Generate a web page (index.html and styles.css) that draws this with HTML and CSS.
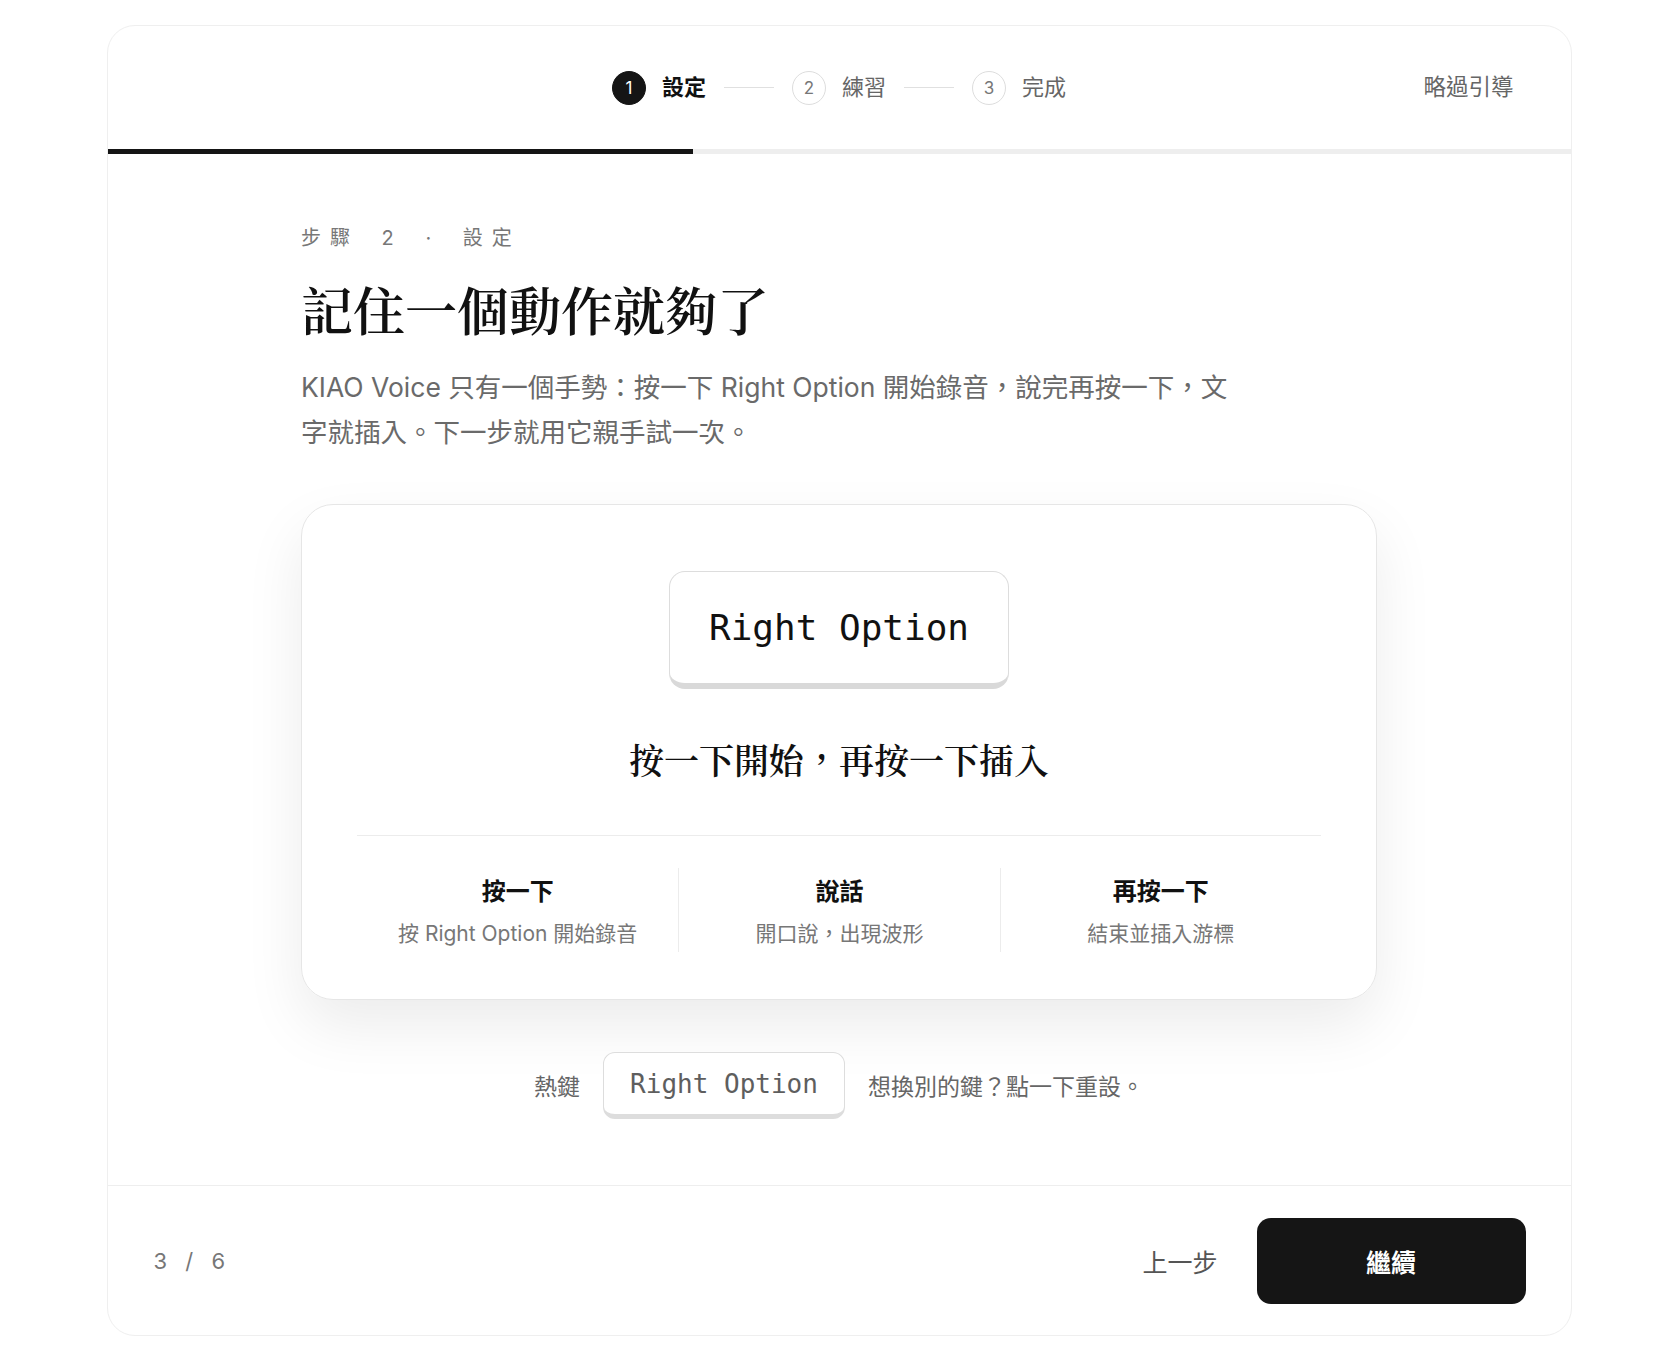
FILE: index.html
```html
<!DOCTYPE html>
<html lang="zh-Hant">
<head>
    <meta charset="UTF-8">
    <meta name="viewport" content="width=device-width, initial-scale=1.0">
    <title>KIAO Voice 引導</title>
    <link rel="stylesheet" href="styles.css">
</head>
<body>
    <div class="window">
        <!-- 上方步驟列 -->
        <header class="top-bar">
            <div></div>
            <div class="steps">
                <div class="step active">
                    <span class="step-num">1</span>
                    <span class="step-label">設定</span>
                </div>
                <span class="step-line"></span>
                <div class="step">
                    <span class="step-num">2</span>
                    <span class="step-label">練習</span>
                </div>
                <span class="step-line"></span>
                <div class="step">
                    <span class="step-num">3</span>
                    <span class="step-label">完成</span>
                </div>
            </div>
            <a class="skip-link">略過引導</a>
        </header>

        <div class="progress">
            <div class="progress-fill" style="width: 40%"></div>
        </div>

        <main class="content">
            <div class="eyebrow">步驟 2 · 設定</div>
            <h1 class="title">記住一個動作就夠了</h1>
            <p class="lead">KIAO Voice 只有一個手勢：按一下 Right Option 開始錄音，說完再按一下，文字就插入。下一步就用它親手試一次。</p>

            <!-- 示範卡片 -->
            <section class="demo-card">
                <div class="keycap">Right Option</div>
                <div class="demo-caption">按一下開始，再按一下插入</div>
                <div class="demo-divider"></div>
                <div class="demo-steps">
                    <div class="demo-step">
                        <div class="demo-step-title">按一下</div>
                        <div class="demo-step-desc">按 Right Option 開始錄音</div>
                    </div>
                    <div class="demo-step">
                        <div class="demo-step-title">說話</div>
                        <div class="demo-step-desc">開口說，出現波形</div>
                    </div>
                    <div class="demo-step">
                        <div class="demo-step-title">再按一下</div>
                        <div class="demo-step-desc">結束並插入游標</div>
                    </div>
                </div>
            </section>

            <!-- 熱鍵設定 -->
            <div class="hotkey-row">
                <span class="hotkey-label">熱鍵</span>
                <button class="hotkey-key">Right Option</button>
                <span class="hotkey-hint">想換別的鍵？點一下重設。</span>
            </div>
        </main>

        <footer class="bottom-bar">
            <span class="page-count">3 / 6</span>
            <div class="actions">
                <button class="btn-back">上一步</button>
                <button class="btn-next">繼續</button>
            </div>
        </footer>
    </div>
</body>
</html>
```

FILE: styles.css
```css
* {
    margin: 0;
    padding: 0;
    box-sizing: border-box;
}

body {
    background-color: #ffffff;
    font-family: 'Inter', 'Noto Sans CJK TC', sans-serif;
    color: #111111;
    padding: 25px 0 24px;
}

button {
    font-family: inherit;
    border: none;
    background: none;
    cursor: pointer;
}

.window {
    width: 1465px;
    height: 1311px;
    margin: 0 auto;
    border: 1px solid #efefef;
    border-radius: 28px;
    overflow: hidden;
    display: flex;
    flex-direction: column;
    background-color: #ffffff;
}

/* 上方步驟列 */
.top-bar {
    height: 123px;
    display: grid;
    grid-template-columns: 1fr auto 1fr;
    align-items: center;
    padding: 0 57px;
}

.steps {
    display: flex;
    align-items: center;
    gap: 18px;
}

.step {
    display: flex;
    align-items: center;
    gap: 16px;
}

.step-num {
    width: 34px;
    height: 34px;
    border-radius: 50%;
    border: 1.5px solid #dddddd;
    display: flex;
    align-items: center;
    justify-content: center;
    font-size: 17px;
    color: #777777;
}

.step-label {
    font-size: 22px;
    color: #666666;
    padding-bottom: 5px;
}

.step.active .step-num {
    background-color: #151515;
    border-color: #151515;
    color: #ffffff;
}

.step.active .step-label {
    color: #111111;
    font-weight: 700;
}

.step-line {
    width: 50px;
    height: 1.5px;
    background-color: #e0e0e0;
}

.skip-link {
    justify-self: end;
    font-size: 22.5px;
    color: #666666;
    padding-bottom: 5px;
    cursor: pointer;
}

.progress {
    height: 5px;
    background-color: #eeeeee;
}

.progress-fill {
    height: 100%;
    background-color: #151515;
}

/* 主內容 */
.content {
    flex: 1;
    width: 1076px;
    margin: 0 auto;
    padding-top: 70px;
    display: flex;
    flex-direction: column;
}

.eyebrow {
    font-size: 20px;
    line-height: 28px;
    letter-spacing: 9px;
    word-spacing: 8px;
    color: #777777;
}

.title {
    margin-top: 23px;
    font-family: 'Noto Serif CJK TC', 'Noto Serif TC', serif;
    font-size: 52px;
    line-height: 68px;
    font-weight: 600;
    color: #111111;
}

.lead {
    margin-top: 22px;
    max-width: 940px;
    font-size: 26.5px;
    line-height: 45px;
    color: #6a6a6a;
}

.demo-card {
    margin-top: 49px;
    border: 1px solid #e6e6e6;
    border-radius: 32px;
    padding: 66px 55px 47px;
    display: flex;
    flex-direction: column;
    align-items: center;
    box-shadow: 0 26px 60px rgba(0, 0, 0, 0.08);
}

.keycap {
    width: 340px;
    height: 118px;
    border: 1.5px solid #dddddd;
    border-bottom: 6px solid #d9d9d9;
    border-radius: 16px;
    display: flex;
    align-items: center;
    justify-content: center;
    font-family: 'DejaVu Sans Mono', 'Liberation Mono', monospace;
    font-size: 36px;
    color: #111111;
}

.demo-caption {
    margin-top: 46px;
    font-family: 'Noto Serif CJK TC', 'Noto Serif TC', serif;
    font-size: 35px;
    line-height: 48px;
    font-weight: 600;
    color: #111111;
}

.demo-divider {
    align-self: stretch;
    margin-top: 52px;
    height: 1px;
    background-color: #ececec;
}

.demo-steps {
    align-self: stretch;
    margin-top: 32px;
    display: grid;
    grid-template-columns: repeat(3, 1fr);
}

.demo-step {
    text-align: center;
    padding: 7px 0 3px;
}

.demo-step + .demo-step {
    border-left: 1px solid #ececec;
}

.demo-step-title {
    font-size: 24px;
    line-height: 34px;
    font-weight: 700;
    color: #111111;
}

.demo-step-desc {
    margin-top: 10px;
    font-size: 21px;
    line-height: 30px;
    color: #777777;
}

.hotkey-row {
    margin-top: 52px;
    display: flex;
    align-items: center;
    justify-content: center;
    gap: 23px;
    font-size: 23px;
    color: #666666;
}

.hotkey-label,
.hotkey-hint {
    padding-bottom: 2px;
}

.hotkey-key {
    width: 242px;
    height: 67px;
    border: 1.5px solid #dddddd;
    border-bottom: 5px solid #dddddd;
    border-radius: 12px;
    background-color: #ffffff;
    font-family: 'DejaVu Sans Mono', 'Liberation Mono', monospace;
    font-size: 26px;
    color: #5e5e5e;
}

/* 底部按鈕列 */
.bottom-bar {
    height: 150px;
    border-top: 1px solid #eeeeee;
    padding: 0 45px 0 46px;
    display: flex;
    align-items: center;
    justify-content: space-between;
}

.page-count {
    font-size: 22px;
    letter-spacing: 6px;
    color: #777777;
}

.actions {
    display: flex;
    align-items: center;
    gap: 39px;
}

.btn-back {
    font-size: 25px;
    color: #555555;
}

.btn-next {
    width: 269px;
    height: 86px;
    border-radius: 14px;
    background-color: #151515;
    color: #ffffff;
    font-size: 25px;
    font-weight: 700;
}
```
